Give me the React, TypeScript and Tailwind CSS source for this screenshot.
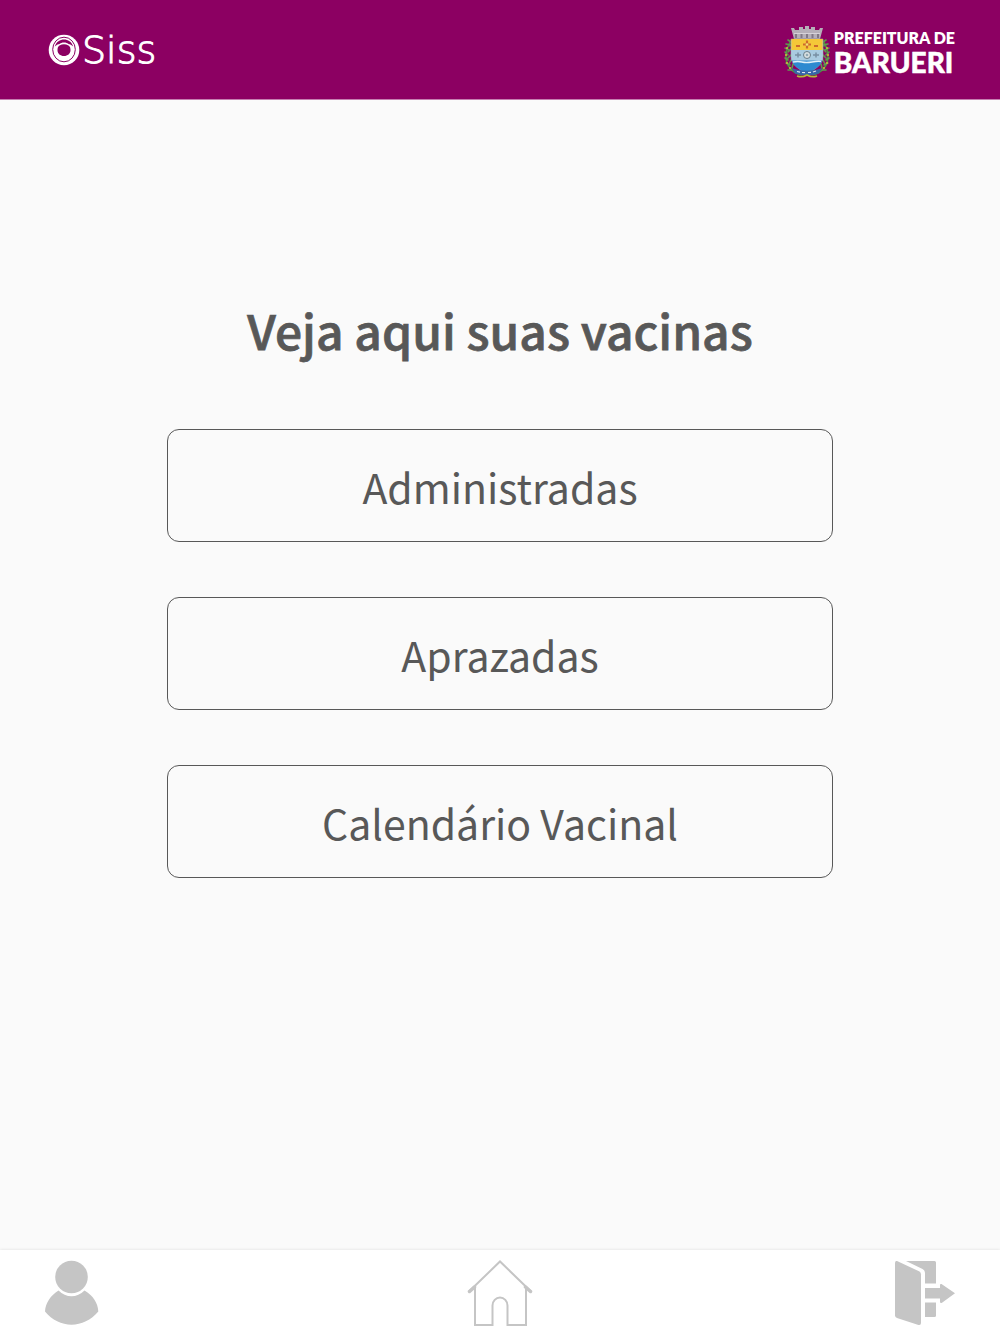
import React from "react";

function SissMark() {
  return (
    <svg viewBox="0 0 32 32" className="size-8" aria-hidden="true">
      <circle cx="16" cy="16" r="15.3" fill="#fff" />
      <ellipse cx="16" cy="15.500" rx="11.300" ry="12.300" fill="none" stroke="#8c0062" strokeWidth="1" />
      <path
        d="M6.800 12.500C8.500 7.500 12 5.500 16 5.500s7.500 2 9.200 7c-1.800-1.800-3-2.300-4.200-2.300-1.500-1.200-3.200-1.700-5-1.700s-3.500.5-5 1.700c-1.200 0-2.400.5-4.200 2.300z"
        fill="#8c0062"
      />
      <path
        d="M11.500 11.500Q16 9 20.500 11.500C22.300 12.500 22.500 14.500 22.500 16.200c0 3.400-2.800 5.800-6.500 5.800s-6.500-2.400-6.500-5.800c0-1.700.2-3.700 2-4.700z"
        fill="#8c0062"
      />
    </svg>
  );
}

function CityCrest() {
  const windows = [0, 1, 2, 3, 4];
  return (
    <svg viewBox="0 0 46 54" className="h-[54px] w-[46px]" aria-hidden="true">
      <g fill="none" stroke="#4a9a3c" strokeWidth="1.500">
        <path d="M7 16C1 25 0 36 6 43c3 4 7 6 12 7" />
        <path d="M39 16c6 9 7 20 1 27-3 4-7 6-12 7" />
      </g>
      <g fill="none" stroke="#5f9a50" strokeWidth="1.600" strokeLinecap="round">
        <path d="M7 17l-3-2M7 20l-5-1M5 25l-4-2M4 30l-3-3M4 35l-3-2M6 40l-4-2M8 45l-4 0M6 21l2-3M4 27l3-3M4 33l3-3M5 39l2-4M8 43l1-4" />
        <path d="M39 17l3-2M39 20l5-1M41 25l4-2M42 30l3-3M42 35l3-2M40 40l4-2M38 45l4 0M40 21l-2-3M42 27l-3-3M42 33l-3-3M41 39l-2-4M38 43l-1-4" />
      </g>
      <g fill="#d9ba3a">
        <circle cx="3" cy="23" r="1" /><circle cx="2" cy="30" r="1" /><circle cx="3" cy="38" r="1" />
        <circle cx="43" cy="23" r="1" /><circle cx="44" cy="30" r="1" /><circle cx="43" cy="38" r="1" />
        <circle cx="6" cy="43" r="1" /><circle cx="40" cy="43" r="1" />
      </g>
      <path d="M7 3h3l1 2h4V2h4v2h2V1h4v3h2V2h4v3h4l1-2h3l-3 11H10z" fill="#b5afb8" />
      <path d="M10 8.500h26" stroke="#d6d2d9" strokeWidth="1" />
      {windows.map((i) => (
        <rect key={i} x={11 + i * 5.5} y="9" width="2" height="4" fill="#817886" />
      ))}
      <path d="M7 14h32v17c0 8-6 12-16 18C13 43 7 39 7 31z" fill="#c9dde9" stroke="#8b8390" strokeWidth="0.800" />
      <path d="M7.400 14h31.200v11H7.400z" fill="#f5c838" />
      <path d="M23 15.500v8M19 19.500h8M12 21h4M30 21h4" stroke="#cd6a2c" strokeWidth="2.200" />
      <circle cx="23" cy="19.500" r="1.300" fill="#f5e376" />
      <path d="M7.400 25h31.200v10.500H7.400z" fill="#a9cbe0" />
      <circle cx="23" cy="30" r="3.500" fill="#d9e1e2" stroke="#687d8a" />
      <circle cx="23" cy="30" r="1.300" fill="#91a9b5" />
      <path d="M11 30h6M14 27.500v5M29 30h6M32 27.500v5" stroke="#7890a3" strokeWidth="1.500" />
      <path d="M8 35.500h30c-1 5-6 9-15 12.500C14 44.500 9 40.500 8 35.500z" fill="#2d8ad0" />
      <path d="M9 37q5-1 9 0t10 0 9-.500" fill="none" stroke="#e2f1f8" strokeWidth="1.500" />
      <path d="M8 43c9 3.500 21 3.500 30 0l-3 5.500c-8 2.500-16 2.500-24 0z" fill="#3765a8" />
      <path d="M13 46.500l3 .700M18 47.500l3 .200M24 47.500l3-.200M29 47l3-1" stroke="#d9e6ef" strokeWidth="1.200" />
      <path d="M13 51q5 2 10-1 5 3 10 1" fill="none" stroke="#b5bd35" strokeWidth="1.500" />
    </svg>
  );
}

const options = ["Administradas", "Aprazadas", "Calendário Vacinal"];

export default function App() {
  return (
    <div className="flex min-h-screen flex-col bg-[#fafafa] font-['Noto_Sans_CJK_JP',sans-serif] text-[#585858]">
      <header className="flex h-[100px] items-center justify-between border-b border-[#c57fb0] bg-[#8c0062] pr-[45px] pl-12 text-white">
        <div className="flex items-center gap-0.5">
          <SissMark />
          <span className="font-['DejaVu_Sans',sans-serif] text-[38px] leading-[48px] font-extralight [-webkit-text-stroke:1px_white]">
            Siss
          </span>
        </div>
        <div className="flex items-center gap-1 pt-1">
          <CityCrest />
          <div className="flex flex-col font-['Lato',sans-serif] whitespace-nowrap">
            <span className="text-[16px] leading-[20px] font-extrabold">PREFEITURA DE</span>
            <span className="text-[28px] leading-[28px] font-black [-webkit-text-stroke:0.5px_white]">BARUERI</span>
          </div>
        </div>
      </header>

      <main className="flex flex-1 flex-col items-center pt-[193px] pb-12">
        <h1 className="text-center text-[48px] leading-[72px] font-medium [-webkit-text-stroke:0.75px_#585858]">
          Veja aqui suas vacinas
        </h1>
        <div className="mt-16 flex w-2/3 flex-col gap-[55px]">
          {options.map((label) => (
            <button
              key={label}
              type="button"
              className="h-[113px] rounded-xl border border-[#585858] text-center text-[41px] leading-[64px] font-normal"
            >
              {label}
            </button>
          ))}
        </div>
      </main>

      <footer className="grid h-[84px] grid-cols-3 items-start bg-white px-[45px] pt-[10px] text-[#c5c5c5] shadow-[0_0_3px_rgba(0,0,0,0.12)]">
        <button type="button" aria-label="Perfil" className="justify-self-start">
          <svg viewBox="0 0 54 66" className="h-[66px] w-[54px]" fill="currentColor" aria-hidden="true">
            <circle cx="26.500" cy="17" r="16.300" />
            <path d="M13.500 30.500c7.500 7.700 18.500 7.700 26 0C48 35.500 53 43 53.300 51.500 39 69 14 69 0 51.500.5 43 5.500 35.500 13.500 30.500z" />
          </svg>
        </button>
        <button type="button" aria-label="Início" className="justify-self-center">
          <svg viewBox="0 0 66 68" className="h-[68px] w-[66px]" fill="none" stroke="currentColor" strokeWidth="2" aria-hidden="true">
            <path d="M2 31.500L33 1.500l31 30" />
            <path d="M2.500 31.500l5-4.500M63.500 31.500l-5-4.500" strokeWidth="3.500" strokeLinecap="round" />
            <path d="M8 27v38h17.500V45.500a7.500 8 0 0 1 15 0V65H59V27" />
          </svg>
        </button>
        <button type="button" aria-label="Sair" className="justify-self-end">
          <svg viewBox="0 0 60 66" className="h-[66px] w-[60px]" fill="currentColor" aria-hidden="true">
            <path d="M2 1l22.500 10.500Q26 12.500 26 14.500V63q0 2.500-2.500 2L2 58q-2-.700-2-2.500V3q0-2.500 2-2z" />
            <path d="M11 1h28.500Q41 1 41 2.500V23.500H30V13q0-2.500-2.500-4z" />
            <path d="M30 28h15v-3q0-1.500 1.500-1L60 33.300 47 42.800q-2 .700-2-1V38.500H30z" />
            <path d="M30 42.500h11v13q0 1.500-1.500 1.500H30z" />
          </svg>
        </button>
      </footer>
    </div>
  );
}
